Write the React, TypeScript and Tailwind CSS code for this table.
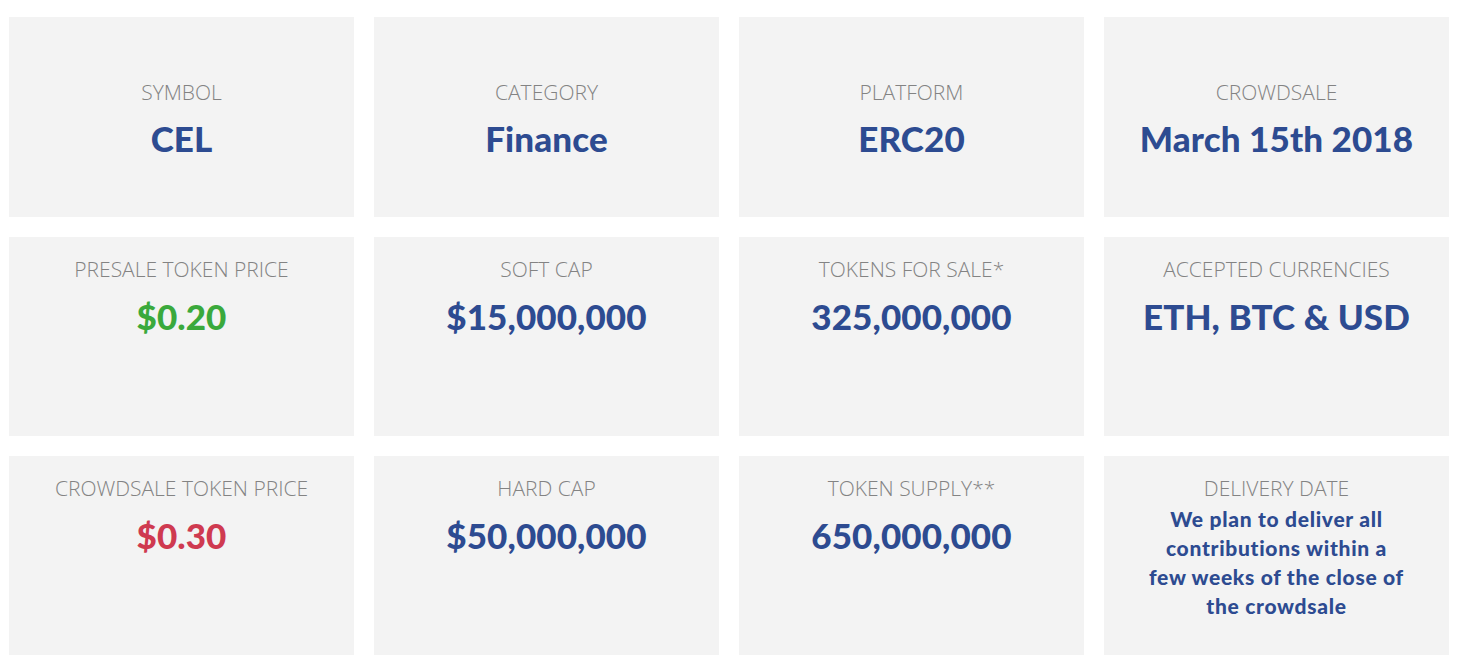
const rows = [
  [
    { label: "SYMBOL", value: "CEL" },
    { label: "CATEGORY", value: "Finance" },
    { label: "PLATFORM", value: "ERC20" },
    { label: "CROWDSALE", value: "March 15th 2018" },
  ],
  [
    { label: "PRESALE TOKEN PRICE", value: "$0.20", color: "text-[#3aa93c]" },
    { label: "SOFT CAP", value: "$15,000,000" },
    { label: "TOKENS FOR SALE*", value: "325,000,000" },
    { label: "ACCEPTED CURRENCIES", value: "ETH, BTC & USD" },
  ],
  [
    { label: "CROWDSALE TOKEN PRICE", value: "$0.30", color: "text-[#cf3a50]" },
    { label: "HARD CAP", value: "$50,000,000" },
    { label: "TOKEN SUPPLY**", value: "650,000,000" },
  ],
];

function Label({ children }: { children: React.ReactNode }) {
  return (
    <div className="font-['Open_Sans',sans-serif] font-light text-[21px] leading-[30px] text-[#838383]">
      {children}
    </div>
  );
}

function Value({ children, color }: { children: React.ReactNode; color?: string }) {
  return (
    <div
      className={`font-['Lato',sans-serif] font-black text-[35px] leading-[44px] tracking-[0.1px] ${
        color ? color : "text-[#2d4b91]"
      }`}
    >
      {children}
    </div>
  );
}

export default function App() {
  return (
    <div className="w-[1460px] h-[667px] bg-white pl-[9px] pt-[17px]">
      <div className="grid grid-cols-[345px_345px_345px_345px] gap-x-5 gap-y-5">
        {rows[0].map((item) => (
          <div
            key={item.label}
            className="h-[200px] bg-[#f3f3f3] flex flex-col items-center text-center pt-[60px] gap-[9px]"
          >
            <Label>{item.label}</Label>
            <Value>{item.value}</Value>
          </div>
        ))}
        {rows[1].map((item) => (
          <div
            key={item.label}
            className="h-[199px] bg-[#f3f3f3] flex flex-col items-center text-center pt-[17px] gap-[10px]"
          >
            <Label>{item.label}</Label>
            <Value color={item.color}>{item.value}</Value>
          </div>
        ))}
        {rows[2].map((item) => (
          <div
            key={item.label}
            className="h-[199px] bg-[#f3f3f3] flex flex-col items-center text-center pt-[17px] gap-[10px]"
          >
            <Label>{item.label}</Label>
            <Value color={item.color}>{item.value}</Value>
          </div>
        ))}
        <div className="h-[199px] bg-[#f3f3f3] flex flex-col items-center text-center pt-[17px]">
          <Label>DELIVERY DATE</Label>
          <div className="mt-[1px] font-['Lato',sans-serif] font-black text-[21px] leading-[29px] tracking-[0.7px] text-[#2d4b91]">
            We plan to deliver all
            <br />
            contributions within a
            <br />
            few weeks of the close of
            <br />
            the crowdsale
          </div>
        </div>
      </div>
    </div>
  );
}
